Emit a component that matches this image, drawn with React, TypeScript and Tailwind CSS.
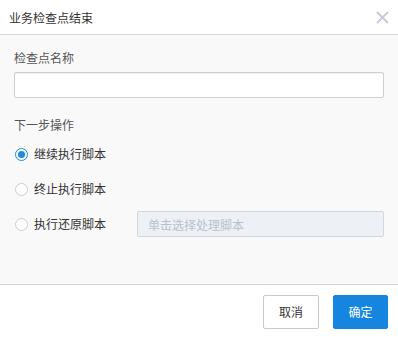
import React, { useState } from 'react';

const OPTIONS = [
  { id: 'continue', label: '继续执行脚本' },
  { id: 'stop', label: '终止执行脚本' },
  { id: 'restore', label: '执行还原脚本' },
];

function Radio({ checked }: { checked: boolean }) {
  return (
    <span
      className={`w-[13px] h-[13px] rounded-full border flex items-center justify-center bg-white shrink-0 ${
        checked ? 'border-[#1a8ae6]' : 'border-[#c6ceda]'
      }`}
    >
      {checked && <span className="w-[7px] h-[7px] rounded-full bg-[#1a8ae6]" />}
    </span>
  );
}

export default function App() {
  const [name, setName] = useState('');
  const [action, setAction] = useState('continue');

  return (
    <div
      className="w-[398px] h-[337px] flex flex-col bg-white text-[12px] text-[#333]"
      style={{ fontFamily: '"Noto Sans CJK SC", "Noto Sans", sans-serif' }}
    >
      {/* Header */}
      <div className="h-[35px] shrink-0 border-b border-[#d6d6d6] flex items-center justify-between pl-[9px] pr-[9px]">
        <span className="text-[12px] text-[#333] pt-[1px]">业务检查点结束</span>
        <button className="w-[13px] h-[13px] flex items-center justify-center text-[#c3ccd8]">
          <svg width="13" height="13" viewBox="0 0 13 13">
            <path d="M1 1 L12 12 M12 1 L1 12" stroke="currentColor" strokeWidth="1.8" />
          </svg>
        </button>
      </div>

      {/* Body */}
      <div className="flex-1 bg-[#f9f9f9] px-[14px] pt-[14px]">
        <div className="h-[18px] leading-[18px] text-[#555]">检查点名称</div>
        <input
          value={name}
          onChange={e => setName(e.target.value)}
          className="mt-[5px] w-full h-[26px] bg-white border border-[#cfcfcf] rounded-[2px] shadow-[inset_0_1px_1px_rgba(0,0,0,0.06)] outline-none px-2 text-[12px]"
        />

        <div className="mt-[18px] h-[18px] leading-[18px] text-[#555]">下一步操作</div>

        <div className="mt-[7px] flex flex-col gap-[9px]">
          {OPTIONS.map(opt => (
            <div key={opt.id} className="h-[26px] flex items-center">
              <label
                className="flex items-center gap-[6px] cursor-pointer w-[123px] pl-[1px]"
                onClick={() => setAction(opt.id)}
              >
                <Radio checked={action === opt.id} />
                <span className="text-[#333]">{opt.label}</span>
              </label>
              {opt.id === 'restore' && (
                <input
                  disabled
                  placeholder="单击选择处理脚本"
                  className="flex-1 h-[26px] bg-[#edf0f5] border border-[#d0d7e1] rounded-[2px] px-[10px] text-[12px] placeholder-[#b9c1cd] outline-none"
                />
              )}
            </div>
          ))}
        </div>
      </div>

      {/* Footer */}
      <div className="h-[53px] shrink-0 border-t border-[#d6d6d6] flex items-start justify-end gap-[14px] pt-[10px] pr-[10px]">
        <button className="w-[56px] h-[34px] bg-white border border-[#c9c9c9] rounded-[2px] text-[#333] text-[12px]">
          取消
        </button>
        <button className="w-[55px] h-[34px] bg-[#1585e0] border border-[#1585e0] rounded-[2px] text-white text-[12px]">
          确定
        </button>
      </div>
    </div>
  );
}
